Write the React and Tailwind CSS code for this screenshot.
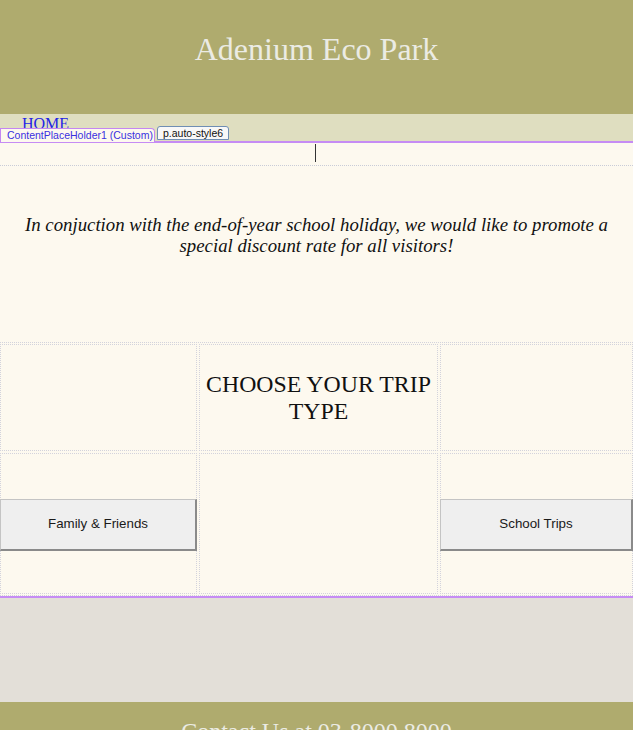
import React from 'react'

const serif = "font-['Liberation_Serif','Times_New_Roman',serif]"

function TripButton({label}) {
	return (
		<button
			type="button"
			className="h-[52px] w-[calc(100%+2px)] -mx-px bg-[#efefef] border border-[#c4c4c4] border-b-2 border-r-2 border-b-[#8a8a8a] border-r-[#8a8a8a] text-[13.33px] text-[#1a1a1a] font-['Liberation_Sans',Arial,sans-serif]"
		>
			{label}
		</button>
	)
}

export default function App() {
	return (
		<div className="w-[633px] h-[730px] overflow-hidden bg-[#e3dfd8]">
			{/* header */}
			<div className={`h-[114px] bg-[#afab6e] pt-[31px] text-center ${serif}`}>
				<h1 className="text-[32px] leading-[37px] text-[#ebebe4]">Adenium Eco Park</h1>
			</div>

			{/* nav */}
			<div className="relative h-[27px] bg-[#dfdec0]">
				<a href="#" className={`absolute left-[22px] top-[0px] text-[16px] leading-[19px] text-[#2323e6] underline ${serif}`}>HOME</a>
				<div className="absolute left-0 top-[14px] h-[14px] w-[155px] rounded-tr-[4px] border border-b-0 border-[#c487f2] bg-[#fdf9ef] pl-[6px] text-[10.5px] leading-[12px] text-[#3a30e0] font-['Liberation_Sans',Tahoma,sans-serif]">
					ContentPlaceHolder1 (Custom)
				</div>
				<div className="absolute left-[157px] top-[12px] h-[14px] w-[72px] rounded-t-[3px] border border-[#6f8eb4] bg-[#f8f8f8] pl-[5px] text-[10.5px] leading-[12px] text-[#111] font-['Liberation_Sans',Tahoma,sans-serif]">
					p.auto-style6
				</div>
			</div>
			<div className="h-[2px] bg-[#c68cf4]" />

			{/* content */}
			<div className={`bg-[#fdf9ef] ${serif}`}>
				<div className="h-[23px] border-b border-dotted border-[#c9ccd8] flex justify-center pt-[1px] pr-[2px]">
					<div className="w-[1px] h-[18px] bg-[#333]" />
				</div>
				<div className="h-[176px] pt-[48px] px-[6px] text-center">
					<p className="text-[18.8px] leading-[21px] italic text-[#111]">
						In conjuction with the end-of-year school holiday, we would like to promote a special discount rate for all visitors!
					</p>
				</div>
				<div className="border-y border-dotted border-[#d3d3dc] py-[1px]">
					<div className="grid grid-cols-[197px_239px_1fr] grid-rows-[107px_141px] gap-[2px]">
						<div className="border border-dotted border-[#d3d3dc]" />
						<div className="border border-dotted border-[#d3d3dc] flex items-center justify-center pt-[1px] text-center">
							<h2 className="text-[23.8px] leading-[27px] text-[#111]">CHOOSE YOUR TRIP TYPE</h2>
						</div>
						<div className="border border-dotted border-[#d3d3dc]" />
						<div className="border border-dotted border-[#d3d3dc] flex items-center pt-[2px]">
							<TripButton label="Family & Friends" />
						</div>
						<div className="border border-dotted border-[#d3d3dc]" />
						<div className="border border-dotted border-[#d3d3dc] flex items-center pt-[2px]">
							<TripButton label="School Trips" />
						</div>
					</div>
				</div>
			</div>
			<div className="h-[2px] bg-[#c68cf4]" />

			{/* spacer */}
			<div className="h-[104px] bg-[#e3dfd8]" />

			{/* footer */}
			<div className={`h-[60px] bg-[#afab6e] pt-[16px] text-center ${serif}`}>
				<h2 className="text-[24px] leading-[27px] text-[#ebebe4]">Contact Us at 03-8000 8000</h2>
			</div>
		</div>
	)
}
